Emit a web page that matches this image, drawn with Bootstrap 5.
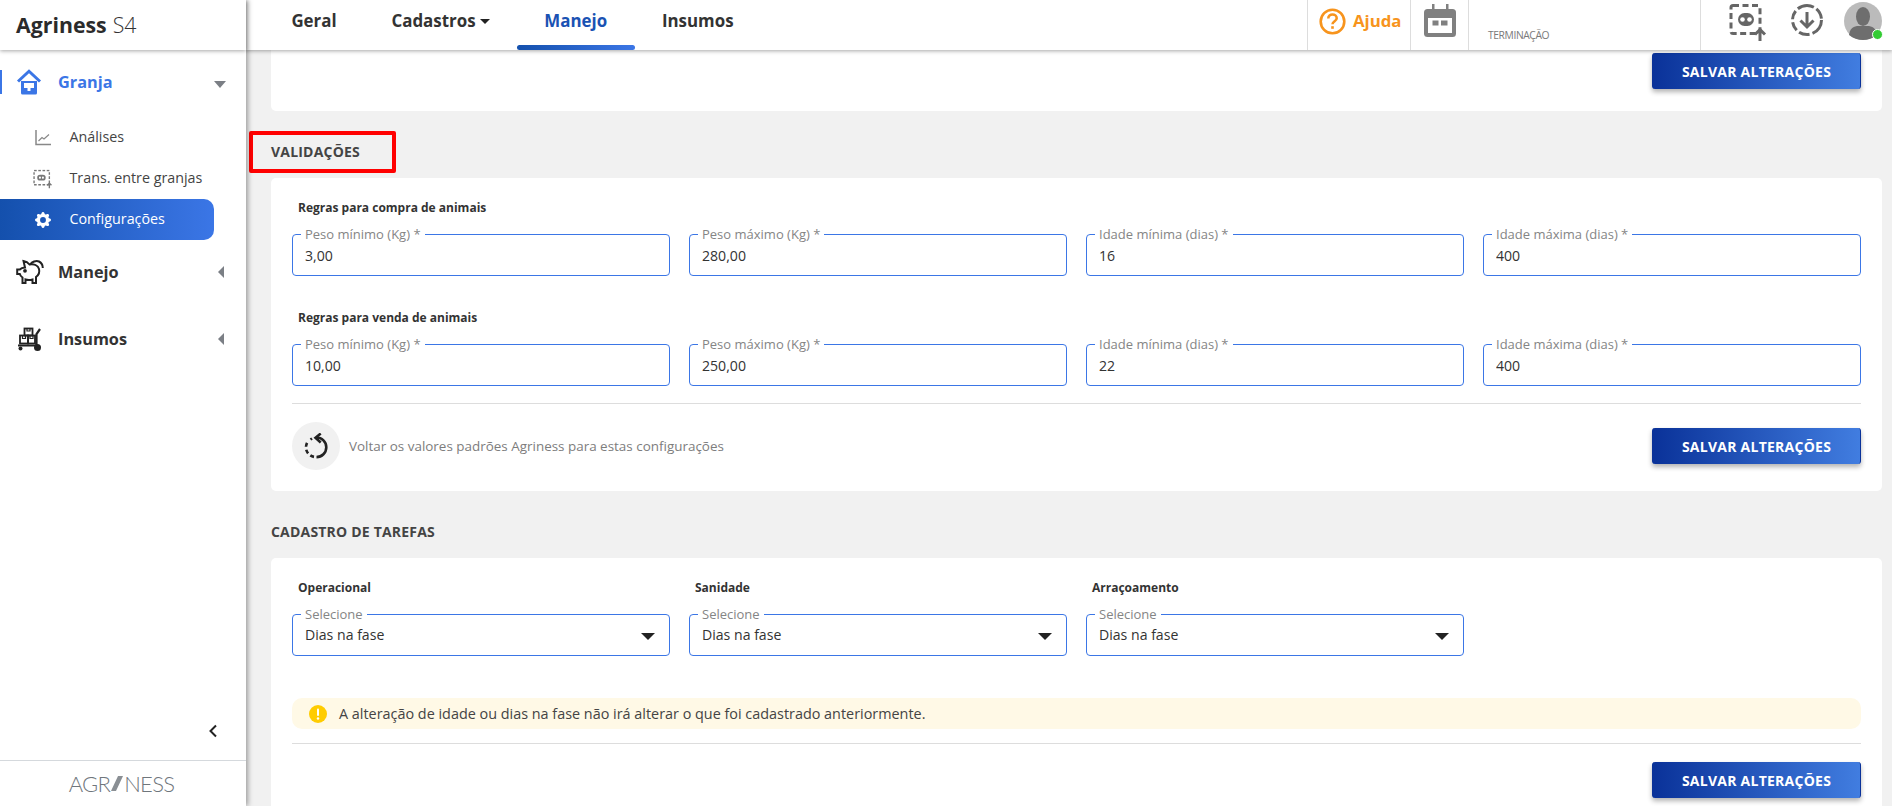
<!DOCTYPE html>
<html lang="pt-BR">
<head>
<meta charset="utf-8">
<title>Agriness S4</title>
<link href="https://cdn.jsdelivr.net/npm/bootstrap@5.3.0/dist/css/bootstrap.min.css" rel="stylesheet">
<style>
html,body{height:100%;overflow:hidden}
body{font-family:"Open Sans","Noto Sans",sans-serif;background:#f1f1f1;color:#333;font-size:14px}
.app-shell{height:806px}
.lateral{width:246px;flex:none;background:#fff;box-shadow:2px 0 5px rgba(0,0,0,.35);z-index:3}
.marca{height:50px;flex:none;padding-left:16px;font-size:21.3px;color:#2b2b2b;box-shadow:0 1px 4px rgba(0,0,0,.35);z-index:1}
.marca b{font-weight:700}
.marca span{font-weight:300;color:#333;margin-left:6px}
.menu{padding-top:10px}
.menu-pri{height:44px;font-size:16.3px;font-weight:700;color:#333;position:relative;padding-left:58px;text-decoration:none}
.menu-pri svg.ico{position:absolute;left:16px;top:50%;transform:translateY(-50%)}
.menu-pri.ativo{color:#3b76e6}
.menu-pri.ativo::before{content:"";position:absolute;left:0;top:10px;width:2px;height:24px;background:#3b76e6}
.seta-b{position:absolute;left:214px;top:21px;border:6.5px solid transparent;border-top:7px solid #7b7f85;border-bottom:0}
.seta-e{position:absolute;left:218px;top:16px;border:6.5px solid transparent;border-right:6px solid #7b7f85;border-left:0}
.sub-lista{margin-top:13px;margin-bottom:10px}
.sub-item{height:41px;width:214px;padding-left:69.5px;padding-bottom:2px;position:relative;color:#444;font-size:14.3px;text-decoration:none}
.sub-item svg{position:absolute;left:34px;top:50%;transform:translateY(-50%)}
.sub-item.sel{background:linear-gradient(90deg,#1450ad,#3b76e6);color:#fff;border-radius:0 10px 10px 0}
.menu-pri+.menu-pri{margin-top:23px}
.recolher{padding-right:28px;padding-bottom:22px}
.rodape-lat{height:46px;flex:none;border-top:1px solid #d5d9dd;color:#6f767c;font-family:Lato,"Open Sans",sans-serif;font-weight:300;font-size:22px;line-height:1;letter-spacing:-.7px;padding-right:3px}
.rodape-lat svg{margin:0 1px}
.coluna{min-width:0}
.topo{height:50px;flex:none;background:#fff;box-shadow:0 1px 4px rgba(0,0,0,.35);z-index:2;padding-left:18px}
.topo .nav-link{position:relative;height:50px;padding:8px 27.4px 0;font-size:16.9px;font-weight:700;color:#333}
.topo .nav-link.active{color:#1a52b3}
.topo .nav-link.active::after{content:"";position:absolute;left:0;right:0;bottom:0;height:5px;border-radius:3px;background:linear-gradient(90deg,#1450ad,#3b76e6)}
.topo .dropdown-toggle::after{vertical-align:.2em;color:#222;margin-left:4px;border-top-width:.32em;border-left-width:.32em;border-right-width:.32em}
.celula{height:50px;border-left:1px solid #ddd}
.cel-ajuda{width:103px;padding-left:11px;color:#f7941d;font-size:16.8px;font-weight:700;gap:7px}
.cel-cal{width:58px;padding-left:13px}
.cel-fase{width:232px;padding:29px 0 0 19px;font-size:10.3px;color:#7a7a7a;letter-spacing:-.4px;line-height:12px}
.cel-acoes{width:192px;position:relative}
.cel-acoes svg{position:absolute}
.avatar-on{position:absolute;left:171px;top:29px;width:11px;height:11px;border-radius:50%;background:#33cc33;border:1.5px solid #fff}
.corpo{padding:0 10px 0 25px;overflow:hidden}
.quadro{background:#fff;border-radius:5px;padding:21px;flex:none}
.quadro-ini{height:61px;padding:3px 21px 0;border-radius:0 0 5px 5px}
.secao{position:relative;font-size:14px;font-weight:700;color:#444;line-height:20px;margin:31px 0 16px;letter-spacing:.2px}
.marca-verm{position:absolute;left:-22px;top:-11px;width:147px;height:42px;border:4.5px solid #f00;border-radius:2px}
.subtit{font-size:12px;font-weight:700;color:#333;line-height:18px;padding-left:6px;margin-bottom:17px}
.campos{--bs-gutter-x:19px;--bs-gutter-y:0}
.campo{position:relative}
.campo .form-control,.campo .form-select{height:42px;border:1px solid #3b76e6;border-radius:4px;padding:0 12px;font-size:14.1px;color:#333;background-image:none;box-shadow:none}
.campo label{position:absolute;left:9px;top:-9px;padding:0 4px;background:#fff;font-size:13px;line-height:18px;color:#858585}
.campo-sel::after{content:"";position:absolute;right:15px;top:19px;border:7px solid transparent;border-top:7px solid #222;border-bottom:0;pointer-events:none}
.traco{margin:17px 0 18px;border-color:#ddd;opacity:1}
.bola{width:48px;height:48px;border-radius:50%;background:#f1f1f1;flex:none}
.dica{color:#7d7d7d;font-size:13.45px;margin-left:9px}
.btn-salvar{width:209px;height:36px;padding:0;background:linear-gradient(90deg,#0a3299,#417de0);border:0;border-right:1px solid #0a3299;border-left:1px solid #0a3299;border-radius:3px;color:#fff;font-size:14px;font-weight:700;box-shadow:0 3px 5px rgba(0,0,0,.3);letter-spacing:.25px}
.aviso{background:#fff9e6;border-radius:10px;height:31px;margin-top:42px;padding-left:17px;font-size:14.4px;color:#444;gap:12px}
.traco2{margin:14px 0 18px;border-color:#ddd;opacity:1}
.mt-sub{margin-top:33px}
</style>
</head>
<body>
<div class="app-shell d-flex">
  <aside class="lateral d-flex flex-column">
    <div class="marca d-flex align-items-center"><b>Agriness</b><span>S4</span></div>
    <nav class="menu flex-grow-1 d-flex flex-column">
      <a class="menu-pri ativo d-flex align-items-center" href="#">
        <svg class="ico" width="26" height="26" viewBox="0 0 26 26"><path d="M2 12.5 13 2.200 24 12.500" fill="none" stroke="#3b76e6" stroke-width="3"/><path fill="#3b76e6" fill-rule="evenodd" d="M5 12h16v12a1.500 1.500 0 0 1-1.500 1.500H6.500A1.500 1.500 0 0 1 5 24zM8 14v5h3.500v3h3v-3H18v-5z"/></svg>
        Granja<i class="seta-b"></i>
      </a>
      <div class="sub-lista d-flex flex-column">
        <a class="sub-item d-flex align-items-center" href="#">
          <svg width="18" height="18" viewBox="0 0 18 18" fill="none" stroke="#888"><path d="M2 1v14.500h15" stroke-width="1.500"/><path d="M4.500 12l3.500-3.500 2 1.500 5-4.500" stroke-width="1.200"/></svg>Análises</a>
        <a class="sub-item d-flex align-items-center" href="#">
          <svg width="19" height="19" viewBox="0 0 18 18" style="margin-left:-1px"><rect x="1" y="1" width="14.500" height="13.500" fill="none" stroke="#777" stroke-width="1.300" stroke-dasharray="2.500 1.500"/><rect x="4" y="5" width="8" height="5.500" rx="2.700" fill="#777"/><circle cx="6.600" cy="7.700" r="1" fill="#fff"/><circle cx="9.400" cy="7.700" r="1" fill="#fff"/><path d="M15.500 18v-4.500M13.500 15l2-2 2 2" fill="none" stroke="#777" stroke-width="1.300"/></svg>Trans. entre granjas</a>
        <a class="sub-item sel d-flex align-items-center" href="#">
          <svg width="16" height="16" viewBox="0 0 16 16" fill="#fff" style="margin-left:1px"><path d="M9.405 1.05c-.413-1.400-2.397-1.400-2.810 0l-.1.340a1.464 1.464 0 0 1-2.105.872l-.31-.17c-1.283-.698-2.686.705-1.987 1.987l.169.311c.446.820.023 1.841-.872 2.105l-.34.1c-1.400.413-1.400 2.397 0 2.810l.34.1a1.464 1.464 0 0 1 .872 2.105l-.17.31c-.698 1.283.705 2.686 1.987 1.987l.311-.169a1.464 1.464 0 0 1 2.105.872l.1.340c.413 1.400 2.397 1.400 2.810 0l.1-.340a1.464 1.464 0 0 1 2.105-.872l.31.17c1.283.698 2.686-.705 1.987-1.987l-.169-.311a1.464 1.464 0 0 1 .872-2.105l.34-.1c1.400-.413 1.400-2.397 0-2.810l-.34-.1a1.464 1.464 0 0 1-.872-2.105l.17-.31c.698-1.283-.705-2.686-1.987-1.987l-.311.169a1.464 1.464 0 0 1-2.105-.872l-.1-.340zM8 10.930a2.929 2.929 0 1 1 0-5.860 2.929 2.929 0 0 1 0 5.858z"/></svg>Configurações</a>
      </div>
      <a class="menu-pri d-flex align-items-center" href="#">
        <svg class="ico" width="28" height="26" viewBox="0 0 28 26" fill="none" stroke="#222" stroke-width="2"><path d="M9 8.500 7.500 2c2.500.3 4.500 1.500 6 3.500 4.500-.6 8.500 1 9.500 4.500.8 3-.3 6-3 8V24h-3.500v-3.500c-2.500.7-5 .7-7 0V24H6.500v-5.500C5 17.500 4.200 16.300 3.800 15H1.200v-4.500h2.600C5 9.300 7 8.700 9 8.500z"/><path d="M14 5.500C16 3 20 1 23 2.500c2.500 1.200 3.800 3.800 3.800 6.500"/><circle cx="9" cy="11.800" r=".9" fill="#222"/></svg>
        Manejo<i class="seta-e"></i>
      </a>
      <a class="menu-pri d-flex align-items-center" href="#">
        <svg class="ico" width="26" height="24" viewBox="0 0 26 24" fill="none" stroke="#222" style="margin-left:1px"><rect x="7.500" y="1.500" width="8" height="7" stroke-width="1.800"/><rect x="3" y="8.500" width="8" height="8" stroke-width="1.800"/><rect x="11" y="8.500" width="7" height="8" stroke-width="1.800"/><path d="M10 1.500v2.500h3V1.500M5.500 8.500v3h3v-3M13 8.500v3h3v-3" stroke-width="1.200"/><path d="M1 18.500h18.500V7l3.500-5" stroke-width="2.200"/><circle cx="20.500" cy="20.500" r="3.500" fill="#222" stroke="none"/><circle cx="3.500" cy="21.500" r="2" fill="#222" stroke="none"/></svg>
        Insumos<i class="seta-e"></i>
      </a>
      <div class="recolher mt-auto d-flex justify-content-end">
        <svg width="10" height="14" viewBox="0 0 10 14" fill="none" stroke="#222" stroke-width="2"><path d="M8 1.500 2.500 7 8 12.500"/></svg>
      </div>
    </nav>
    <div class="rodape-lat d-flex align-items-center justify-content-center">AGR<svg width="12" height="15" viewBox="0 0 12 15"><polygon points="0,15 7,0 12,0 5,15" fill="#8a8f94"/></svg>NESS</div>
  </aside>

  <div class="coluna flex-grow-1 d-flex flex-column">
    <header class="topo d-flex">
      <ul class="nav">
        <li class="nav-item"><a class="nav-link" href="#">Geral</a></li>
        <li class="nav-item"><a class="nav-link dropdown-toggle" href="#">Cadastros</a></li>
        <li class="nav-item"><a class="nav-link active" href="#">Manejo</a></li>
        <li class="nav-item"><a class="nav-link" href="#">Insumos</a></li>
      </ul>
      <div class="ms-auto d-flex">
        <div class="celula cel-ajuda d-flex align-items-start pt-2">
          <svg width="27" height="27" viewBox="0 0 27 27" fill="none" stroke="#f7941d" stroke-width="2.600"><circle cx="13.500" cy="13.500" r="11.800"/><path d="M9.300 10.500c0-2.500 2-4 4.200-4s4.200 1.500 4.200 3.700c0 3-4.200 3-4.200 6"/><path d="M13.500 18.200v2.600"/></svg>
          <span style="line-height:26px">Ajuda</span>
        </div>
        <div class="celula cel-cal">
          <svg width="32" height="33" viewBox="0 0 32 33" class="mt-1"><rect x="0" y="5" width="32" height="28" rx="3.500" fill="#808080"/><rect x="4" y="14" width="24" height="15" fill="#fff"/><rect x="8" y="0" width="2.500" height="8" fill="#808080"/><rect x="22" y="0" width="2.500" height="8" fill="#808080"/><rect x="8.500" y="16.500" width="6" height="5" fill="#808080"/><rect x="17" y="16.500" width="6.500" height="5" fill="#808080"/></svg>
        </div>
        <div class="celula cel-fase">TERMINAÇÃO</div>
        <div class="celula cel-acoes">
          <svg style="left:28px;top:3px" width="40" height="38" viewBox="0 0 40 38" fill="none"><rect x="2" y="2.500" width="29" height="28" rx="2" stroke="#666" stroke-width="3" stroke-dasharray="6 3.500"/><rect x="9" y="10" width="16" height="13" rx="6.500" fill="#666"/><circle cx="13.500" cy="16.500" r="2.300" fill="#fff"/><circle cx="20.500" cy="16.500" r="2.300" fill="#fff"/><path d="M31 38V27M26 31.500l5-5 5 5" stroke="#666" stroke-width="3"/></svg>
          <svg style="left:89px;top:3px" width="34" height="34" viewBox="0 0 34 34" fill="none" stroke="#666"><circle cx="17" cy="17" r="14.500" stroke-width="3" stroke-dasharray="17 3 11 3 9 3 9 3"/><path d="M17 9v15M10.500 17.500 17 24l6.500-6.500" stroke-width="3"/></svg>
          <svg style="left:143px;top:2px" width="38" height="38" viewBox="0 0 38 38"><circle cx="19" cy="19" r="19" fill="#bbb"/><ellipse cx="19" cy="14.500" rx="7" ry="9.500" fill="#6e6e6e"/><path d="M5 33c1-6 3-8 8-9h12c5 1 7 3 8 9-4 3.500-9 5-14 5s-10-1.500-14-5z" fill="#6e6e6e"/></svg>
          <i class="avatar-on"></i>
        </div>
      </div>
    </header>

    <main class="corpo flex-grow-1 d-flex flex-column">
      <section class="quadro quadro-ini d-flex justify-content-end"><button class="btn btn-salvar" type="button">SALVAR ALTERAÇÕES</button></section>

      <h2 class="secao">VALIDAÇÕES<span class="marca-verm"></span></h2>
      <section class="quadro">
        <div class="subtit">Regras para compra de animais</div>
        <div class="row campos">
          <div class="col-3"><div class="campo"><label>Peso mínimo (Kg) *</label><input class="form-control" value="3,00"></div></div>
          <div class="col-3"><div class="campo"><label>Peso máximo (Kg) *</label><input class="form-control" value="280,00"></div></div>
          <div class="col-3"><div class="campo"><label>Idade mínima (dias) *</label><input class="form-control" value="16"></div></div>
          <div class="col-3"><div class="campo"><label>Idade máxima (dias) *</label><input class="form-control" value="400"></div></div>
        </div>
        <div class="subtit mt-sub">Regras para venda de animais</div>
        <div class="row campos">
          <div class="col-3"><div class="campo"><label>Peso mínimo (Kg) *</label><input class="form-control" value="10,00"></div></div>
          <div class="col-3"><div class="campo"><label>Peso máximo (Kg) *</label><input class="form-control" value="250,00"></div></div>
          <div class="col-3"><div class="campo"><label>Idade mínima (dias) *</label><input class="form-control" value="22"></div></div>
          <div class="col-3"><div class="campo"><label>Idade máxima (dias) *</label><input class="form-control" value="400"></div></div>
        </div>
        <hr class="traco">
        <div class="d-flex align-items-center">
          <div class="bola d-flex align-items-center justify-content-center">
            <svg width="26" height="26" viewBox="0 0 26 26" fill="none" stroke="#222" stroke-width="2.600"><path d="M13.500 4.500a9.800 9.800 0 0 1 0 19.600"/><path d="M11 23.900a9.800 9.800 0 0 1-6.500-14.900" stroke-dasharray="4 3"/><path d="M7.500 6.500l1.500-1" /><path d="M17.700.5 12.500 4.800l5.200 4.700"/></svg>
          </div>
          <span class="dica">Voltar os valores padrões Agriness para estas configurações</span>
          <button class="btn btn-salvar ms-auto" type="button">SALVAR ALTERAÇÕES</button>
        </div>
      </section>

      <h2 class="secao">CADASTRO DE TAREFAS</h2>
      <section class="quadro">
        <div class="row campos">
          <div class="col-3"><div class="subtit">Operacional</div><div class="campo campo-sel"><label>Selecione</label><select class="form-select"><option>Dias na fase</option></select></div></div>
          <div class="col-3"><div class="subtit">Sanidade</div><div class="campo campo-sel"><label>Selecione</label><select class="form-select"><option>Dias na fase</option></select></div></div>
          <div class="col-3"><div class="subtit">Arraçoamento</div><div class="campo campo-sel"><label>Selecione</label><select class="form-select"><option>Dias na fase</option></select></div></div>
        </div>
        <div class="aviso d-flex align-items-center">
          <svg width="18" height="18" viewBox="0 0 18 18"><circle cx="9" cy="9" r="9" fill="#ffcc00"/><rect x="8" y="3.500" width="2" height="7.500" rx="1" fill="#fff"/><circle cx="9" cy="13.500" r="1.200" fill="#fff"/></svg>
          <span>A alteração de idade ou dias na fase não irá alterar o que foi cadastrado anteriormente.</span>
        </div>
        <hr class="traco2">
        <div class="d-flex justify-content-end"><button class="btn btn-salvar" type="button">SALVAR ALTERAÇÕES</button></div>
      </section>
    </main>
  </div>
</div>
<script src="https://cdn.jsdelivr.net/npm/bootstrap@5.3.0/dist/js/bootstrap.bundle.min.js"></script>
</body>
</html>
